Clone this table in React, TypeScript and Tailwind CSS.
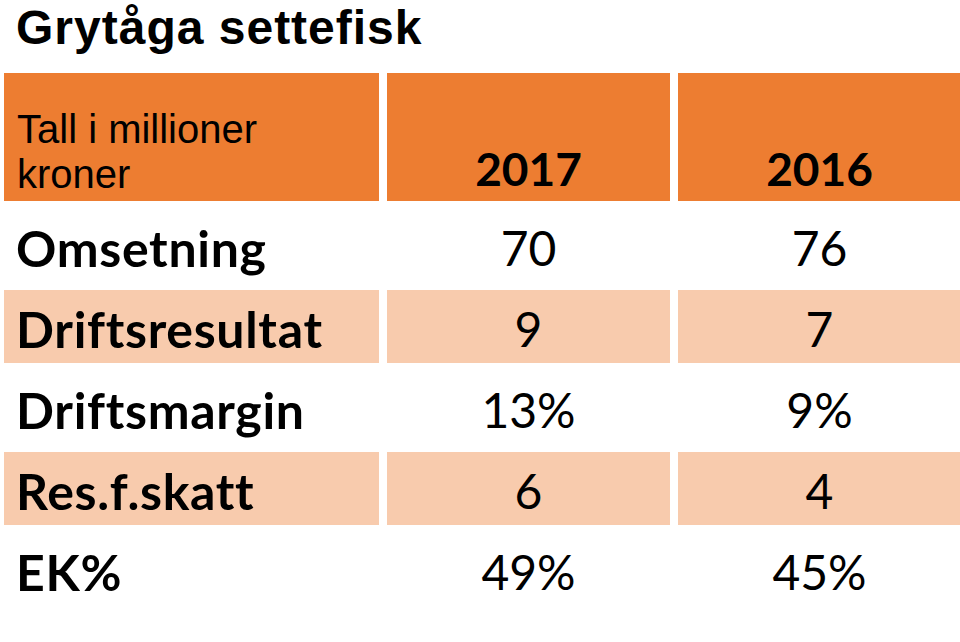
const rows = [
  { label: 'Omsetning', a: '70', b: '76', shaded: false },
  { label: 'Driftsresultat', a: '9', b: '7', shaded: true },
  { label: 'Driftsmargin', a: '13%', b: '9%', shaded: false },
  { label: 'Res.f.skatt', a: '6', b: '4', shaded: true },
  { label: 'EK%', a: '49%', b: '45%', shaded: false },
];

const body = "font-['Lato','Noto_Sans',sans-serif]";

export default function App() {
  return (
    <div className="h-[642px] w-[960px] overflow-hidden bg-white text-black">
      <h1 className="pl-4 pt-[6px] font-['Liberation_Sans',Arial,sans-serif] text-[48px] font-bold leading-[44px] tracking-[1px]">
        Grytåga settefisk
      </h1>

      <div className="ml-1 mt-[23px] grid grid-cols-[375px_283px_283px] gap-2">
        <div className="h-[128px] bg-[#ed7d31] pl-[13px] pt-[34px] font-['Liberation_Sans',Arial,sans-serif] text-[40px] leading-[45px]">
          Tall i millioner
          <br />
          kroner
        </div>
        {['2017', '2016'].map((year) => (
          <div
            key={year}
            className={`flex h-[128px] items-end justify-center bg-[#ed7d31] pb-[9px] ${body} text-[46px] font-bold leading-none`}
          >
            {year}
          </div>
        ))}

        {rows.map((row) => {
          const bg = row.shaded ? 'bg-[#f8cbad]' : 'bg-white';
          return [
            <div
              key={row.label}
              className={`flex h-[73px] items-center pl-3 pt-[5px] ${bg} ${body} text-[50px] font-bold tracking-[0.7px]`}
            >
              {row.label}
            </div>,
            <div
              key={row.label + '-a'}
              className={`flex h-[73px] items-center justify-center pt-[5px] ${bg} ${body} text-[48px]`}
            >
              {row.a}
            </div>,
            <div
              key={row.label + '-b'}
              className={`flex h-[73px] items-center justify-center pt-[5px] ${bg} ${body} text-[48px]`}
            >
              {row.b}
            </div>,
          ];
        })}
      </div>
    </div>
  );
}
